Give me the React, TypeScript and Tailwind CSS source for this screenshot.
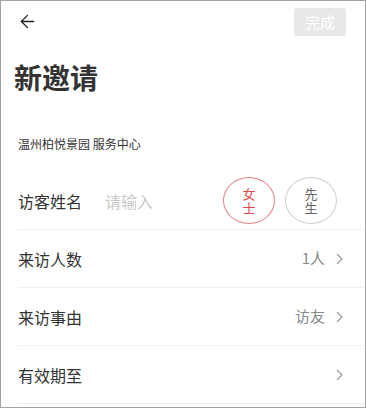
import { ArrowLeft } from 'lucide-react'

type Row = { label: string; value?: string }

const rows: Row[] = [
  { label: '来访人数', value: '1人' },
  { label: '来访事由', value: '访友' },
  { label: '有效期至' },
]

function Chevron() {
  return (
    <svg width="7" height="12" viewBox="0 0 7 12" fill="none" className="ml-[11px]">
      <path d="M1 1l5 5-5 5" stroke="#9a9a9a" strokeWidth="1.2" />
    </svg>
  )
}

export default function App() {
  return (
    <div
      className="w-[366px] h-[408px] border border-[#a3a3a3] bg-white overflow-hidden text-[#333]"
      style={{ fontFamily: '"Noto Sans CJK SC", "Noto Sans", sans-serif' }}
    >
      {/* 顶部栏 */}
      <div className="h-[40px] flex items-center justify-between pl-[16px] pr-[19px] pt-[1px]">
        <ArrowLeft size={21} strokeWidth={1.5} color="#222" />
        <button className="w-[52px] h-[28px] rounded-[3px] bg-[#e8e8e8] text-white text-[15px] leading-none">
          完成
        </button>
      </div>

      <div className="mt-[16px] h-[40px] pl-[13px] text-[28px] font-bold leading-[40px] text-[#333]">
        新邀请
      </div>

      <div className="mt-[37px] pl-[17px] text-[12px] leading-[20px] text-[#333]">
        温州柏悦景园 服务中心
      </div>

      <div className="mt-[18px] pl-[17px]">
        <div className="h-[57px] flex items-center pr-[28px]">
          <span className="text-[16px] w-[87px]">访客姓名</span>
          <span className="text-[16px] text-[#c9c9c9] flex-1">请输入</span>
          <div className="w-[52px] h-[47px] rounded-[50%] border border-[#e38383] flex items-center justify-center">
            <span className="w-[13px] break-all text-[13px] leading-[14px] text-[#e0484b]">女士</span>
          </div>
          <div className="ml-[10px] w-[52px] h-[47px] rounded-[50%] border border-[#cfcfcf] flex items-center justify-center">
            <span className="w-[13px] break-all text-[13px] leading-[14px] text-[#666]">先生</span>
          </div>
        </div>
        {rows.map(r => (
          <div key={r.label} className="border-t border-[#f0f0f0] h-[58px] flex items-center pr-[22px]">
            <span className="text-[16px] flex-1">{r.label}</span>
            {r.value && <span className="text-[15px] text-[#8a8a8a]">{r.value}</span>}
            <Chevron />
          </div>
        ))}
        <div className="border-t border-[#f0f0f0]" />
      </div>
    </div>
  )
}
